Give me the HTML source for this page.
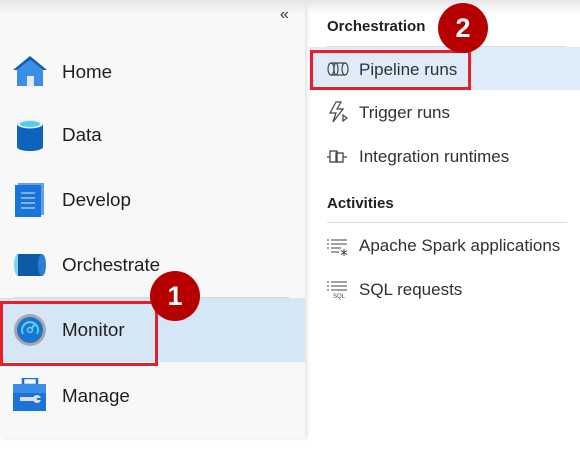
<!DOCTYPE html>
<html><head><style>
*{margin:0;padding:0;box-sizing:border-box}
body{width:580px;height:466px;background:#fff;font-family:"Segoe UI","Liberation Sans",sans-serif;position:relative;overflow:hidden;color:#201f1e}
.left{position:absolute;left:0;top:0;width:305px;height:438px;background:#f8f8f8;box-shadow:2px 0 4px rgba(0,0,0,.12)}
.topsh{position:absolute;left:0;top:0;width:580px;height:14px;background:linear-gradient(#e6e6e6,rgba(255,255,255,0))}
.lab{position:absolute;left:62px;font-size:18.8px;line-height:24px;color:#201f1e}
.ic{position:absolute;left:13px}
.r{position:absolute;left:359px;font-size:17px;line-height:22px;color:#323130}
.h{position:absolute;left:327px;font-size:15px;font-weight:bold;line-height:20px;color:#201f1e}
.badge{position:absolute;width:50px;height:50px;border-radius:50%;background:#b60000;color:#fff;font-weight:bold;font-size:27px;text-align:center;line-height:50px;font-family:"Liberation Sans",sans-serif}
.ri{position:absolute;left:327px}
</style></head><body>
<div class="left"></div>
<div class="topsh"></div>
<div style="position:absolute;left:280px;top:6px;font-size:16px;color:#333">«</div>
<svg class="ic" style="top:54px" width="34" height="34" viewBox="0 0 34 34"><path d="M0 16 L17 2 L34 16 L30 16 L17 6 L4 16Z" fill="#0f5fb3"/><path d="M4 16 L17 6 L30 16 V32 H4Z" fill="#3b8ee8"/><rect x="14" y="22" width="7" height="10" fill="#e8e8e8"/></svg>
<div class="lab" style="top:60px">Home</div>
<svg class="ic" style="top:118px;left:16px" width="28" height="34" viewBox="0 0 28 34"><path d="M1 6 V29 A13 4 0 0 0 27 29 V6Z" fill="#0d64bd"/><ellipse cx="14" cy="6" rx="13" ry="4.5" fill="#e9e9e9"/><ellipse cx="14" cy="6" rx="10" ry="3" fill="#4fd0ee"/></svg>
<div class="lab" style="top:123px">Data</div>
<svg class="ic" style="top:183px;left:15px" width="30" height="34" viewBox="0 0 30 34"><rect x="3" y="0" width="26" height="32" fill="#5ea0ef"/><rect x="0" y="2" width="26" height="32" fill="#1a73d6"/><g stroke="#9cc6f5" stroke-width="1.5"><line x1="6" y1="10" x2="20" y2="10"/><line x1="6" y1="15" x2="20" y2="15"/><line x1="6" y1="20" x2="20" y2="20"/><line x1="6" y1="25" x2="20" y2="25"/></g></svg>
<div class="lab" style="top:188px">Develop</div>
<svg class="ic" style="top:252px" width="34" height="26" viewBox="0 0 34 26"><ellipse cx="5" cy="13" rx="4" ry="11" fill="#7fd7f2"/><rect x="5" y="2" width="24" height="22" fill="#0d5aa8"/><ellipse cx="29" cy="13" rx="4" ry="11" fill="#2a7fd4"/></svg>
<div class="lab" style="top:253px">Orchestrate</div>
<div style="position:absolute;left:13px;top:297px;width:276px;height:1px;background:#d8d8d8"></div>
<div style="position:absolute;left:0;top:298px;width:305px;height:64px;background:#d5e6f6"></div>
<svg class="ic" style="top:313px" width="34" height="34" viewBox="0 0 34 34"><circle cx="17" cy="17" r="16" fill="#a8a8a8"/><circle cx="17" cy="17" r="13" fill="#1b75d0"/><path d="M10 21 A8 8 0 1 1 24 21" fill="none" stroke="#5ed0f5" stroke-width="2"/><circle cx="17" cy="17" r="2.5" fill="none" stroke="#5ed0f5" stroke-width="1.5"/><line x1="18" y1="16" x2="22" y2="11" stroke="#5ed0f5" stroke-width="2"/></svg>
<div class="lab" style="top:318px">Monitor</div>
<div style="position:absolute;left:0;top:301px;width:158px;height:65px;border:3px solid #e5202b"></div>
<svg class="ic" style="top:378px" width="34" height="34" viewBox="0 0 34 34"><rect x="10" y="0" width="14" height="7" fill="none" stroke="#1a73d6" stroke-width="2.5"/><rect x="0" y="6" width="33" height="27" fill="#1a73d6"/><rect x="0" y="6" width="33" height="9" fill="#3b8ee8"/><rect x="7" y="19" width="16" height="4" fill="#ddd"/><circle cx="24" cy="21" r="4" fill="#ddd"/><rect x="24" y="20" width="6" height="2" fill="#1a73d6"/></svg>
<div class="lab" style="top:384px">Manage</div>
<div class="badge" style="left:150px;top:271px">1</div>

<div class="h" style="top:17px">Orchestration</div>
<div style="position:absolute;left:327px;top:46px;width:240px;height:1px;background:#ddd"></div>
<div style="position:absolute;left:309px;top:47px;width:271px;height:43px;background:#deecf9"></div>
<svg class="ri" style="top:62px" width="22" height="14" viewBox="0 0 22 14" fill="none" stroke="#444" stroke-width="1.2"><ellipse cx="4" cy="7" rx="3" ry="6"/><ellipse cx="18" cy="7" rx="3" ry="6"/><path d="M4 1 H18 M4 13 H18"/><ellipse cx="9" cy="7" rx="2" ry="6"/></svg>
<div class="r" style="top:59px">Pipeline runs</div>
<div style="position:absolute;left:310px;top:50px;width:161px;height:40px;border:3px solid #e5202b"></div>
<div class="badge" style="left:438px;top:3px">2</div>
<svg class="ri" style="top:101px" width="22" height="22" viewBox="0 0 22 22" fill="none" stroke="#444" stroke-width="1.2"><path d="M9 1 L3 12 H9 L6 21 L16 8 H10 L14 1Z"/><path d="M16 14 L20 17 L16 20Z"/></svg>
<div class="r" style="top:102px">Trigger runs</div>
<svg class="ri" style="top:150px" width="20" height="14" viewBox="0 0 20 14" fill="none" stroke="#444" stroke-width="1.3"><rect x="3" y="1" width="7" height="11"/><rect x="9" y="3" width="7" height="9"/><path d="M0 7 H3 M16 7 H20"/></svg>
<div class="r" style="top:146px">Integration runtimes</div>
<div class="h" style="top:194px">Activities</div>
<div style="position:absolute;left:327px;top:222px;width:240px;height:1px;background:#ddd"></div>
<svg class="ri" style="top:238px" width="22" height="18" viewBox="0 0 22 18" stroke="#444" stroke-width="1"><path d="M0 2 H2 M0 6 H2 M0 10 H2 M4 2 H20 M4 6 H20 M4 10 H14 M4 14 H12"/><path d="M17 11 V18 M14 12.5 L20 16.5 M20 12.5 L14 16.5"/></svg>
<div class="r" style="top:235px">Apache Spark applications</div>
<svg class="ri" style="top:280px" width="22" height="20" viewBox="0 0 22 20" stroke="#444" stroke-width="1"><path d="M0 2 H2 M0 6 H2 M0 10 H2 M4 2 H20 M4 6 H20 M4 10 H20"/><text x="6" y="18" font-size="6" fill="#444" stroke="none" font-family="Liberation Sans">SQL</text></svg>
<div class="r" style="top:279px">SQL requests</div>
</body></html>
